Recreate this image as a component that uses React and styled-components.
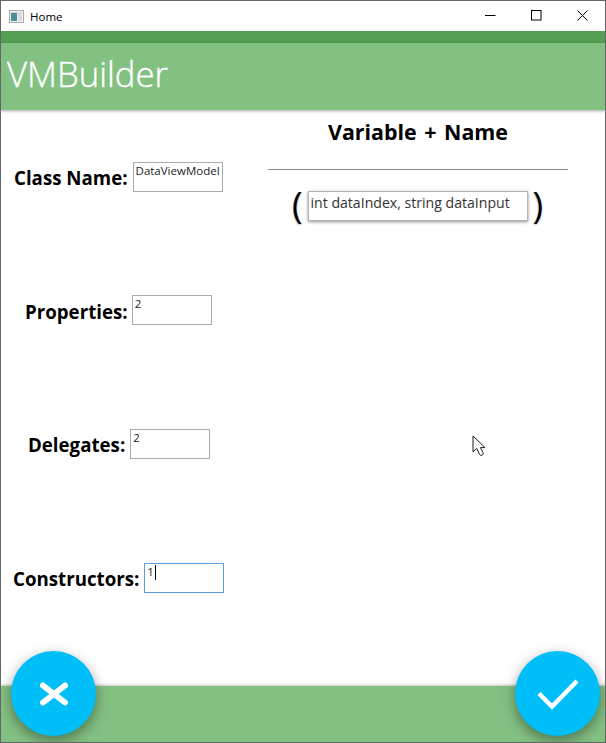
import React from "react";
import styled, { createGlobalStyle } from "styled-components";

const Global = createGlobalStyle`
  html, body { margin: 0; padding: 0; background: #fff; }
  * { box-sizing: border-box; }
  body { font-family: "Open Sans", "Noto Sans", "Liberation Sans", sans-serif; }
`;

const Frame = styled.div`
  position: relative;
  width: 606px;
  height: 743px;
  border: 1px solid #666;
  display: flex;
  flex-direction: column;
  overflow: hidden;
  background: #fff;
`;
const TitleBar = styled.div`
  height: 30px;
  flex: none;
  display: flex;
  align-items: center;
  background: #fff;
  padding-left: 8px;
`;
const TitleText = styled.span`
  font-size: 11.5px;
  color: #000;
  margin-left: 6px;
`;
const WinButtons = styled.div`
  margin-left: auto;
  display: flex;
  align-items: center;
`;
const WinButton = styled.div`
  width: 46px;
  height: 30px;
  display: flex;
  align-items: center;
  justify-content: center;
  margin-top: -1px;
`;
const Strip = styled.div`
  height: 12px;
  flex: none;
  background: #559f55;
`;
const AppBar = styled.header`
  height: 67px;
  flex: none;
  background: #83c183;
  box-shadow: 0 1px 3px rgba(0, 0, 0, 0.35);
  display: flex;
  align-items: center;
  padding-left: 6px;
  position: relative;
  z-index: 1;
`;
const AppTitle = styled.h1`
  margin: 0 0 5px;
  font-size: 34.7px;
  font-weight: 300;
  -webkit-text-stroke: 0.35px #fff;
  color: #fff;
  line-height: 1;
`;
const Main = styled.main`
  flex: 1;
  display: flex;
  min-height: 0;
`;
const Form = styled.section`
  width: 260px;
  flex: none;
  display: flex;
  flex-direction: column;
  padding-top: 52px;
  gap: 104px;
`;
const Row = styled.div`
  display: flex;
  align-items: center;
  height: 30px;
  padding-left: ${(p) => p.$indent}px;
  gap: ${(p) => p.$gap}px;
  margin-top: ${(p) => p.$lift || 0}px;
`;
const Label = styled.label`
  font-size: 18.7px;
  font-weight: 700;
  color: #000;
  white-space: nowrap;
  padding-top: ${(p) => p.$drop || 0}px;
`;
const Field = styled.div`
  width: ${(p) => p.$width}px;
  height: 30px;
  flex: none;
  border: 1px solid ${(p) => (p.$focused ? "#5b9ee0" : "#ababab")};
  font-size: 11.5px;
  line-height: 14px;
  padding: 1px 2px;
  color: #1c1c1c;
  display: flex;
  align-items: flex-start;
  white-space: nowrap;
`;
const Caret = styled.span`
  width: 1px;
  height: 15px;
  background: #000;
  margin-left: 1px;
`;
const Side = styled.section`
  width: 300px;
  margin-left: 7px;
  flex: none;
  display: flex;
  flex-direction: column;
  align-items: center;
`;
const Heading = styled.h2`
  margin: 8px 0 0;
  height: 51px;
  font-size: 21.4px;
  font-weight: 700;
  line-height: 28px;
  color: #000;
  word-spacing: 2px;
`;
const Rule = styled.hr`
  width: 100%;
  height: 1px;
  margin: 0;
  border: 0;
  background: #8a8a8a;
`;
const ParamRow = styled.div`
  display: flex;
  align-items: center;
  gap: 5px;
  margin-top: 20px;
  margin-left: -1px;
`;
const Paren = styled.span`
  font-size: 36px;
  font-weight: 400;
  color: #000;
  line-height: 30px;
  text-shadow: 0 1px 2px rgba(0, 0, 0, 0.3);
  margin-bottom: 2px;
`;
const ParamField = styled.div`
  width: 220px;
  height: 30px;
  border: 1px solid #b5b5b5;
  box-shadow: 0 1px 3px rgba(0, 0, 0, 0.45);
  font-size: 14.1px;
  color: #333;
  padding: 1px 2px;
  line-height: 20px;
  white-space: nowrap;
`;
const BottomBar = styled.footer`
  height: 56px;
  flex: none;
  background: #83c183;
  box-shadow: 0 -1px 2px rgba(0, 0, 0, 0.25);
`;
const Fab = styled.button`
  position: absolute;
  top: 650px;
  ${(p) => (p.$right ? "right: 5px;" : "left: 10px;")}
  width: 85px;
  height: 85px;
  border: 0;
  padding: 0;
  border-radius: 50%;
  background: #00bef8;
  box-shadow: 0 5px 14px rgba(0, 0, 0, 0.4);
  display: flex;
  align-items: center;
  justify-content: center;
`;
const Pointer = styled.svg`
  position: absolute;
  left: 471px;
  top: 434px;
`;

export default function App() {
  return (
    <>
      <Global />
      <Frame>
        <TitleBar>
          <svg width="15" height="13" viewBox="0 0 15 13">
            <rect x="0.5" y="0.5" width="14" height="12" fill="#f2f2f2" stroke="#a9a9a9" />
            <rect x="2" y="3" width="6" height="8" fill="#4d8d94" />
            <rect x="9" y="3" width="4" height="8" fill="#d5dde2" />
            <rect x="2" y="2" width="11" height="1" fill="#cfd6dc" />
          </svg>
          <TitleText>Home</TitleText>
          <WinButtons>
            <WinButton>
              <svg width="11" height="11" viewBox="0 0 11 11">
                <path d="M0 5.5H10.5" stroke="#000" strokeWidth="1" />
              </svg>
            </WinButton>
            <WinButton>
              <svg width="11" height="11" viewBox="0 0 11 11">
                <rect x="0.5" y="0.5" width="9.5" height="9.5" fill="none" stroke="#000" />
              </svg>
            </WinButton>
            <WinButton>
              <svg width="11" height="11" viewBox="0 0 11 11">
                <path d="M0.5 0.5L10.5 10.5M10.5 0.5L0.5 10.5" stroke="#000" strokeWidth="1" />
              </svg>
            </WinButton>
          </WinButtons>
        </TitleBar>
        <Strip />
        <AppBar>
          <AppTitle>VMBuilder</AppTitle>
        </AppBar>
        <Main>
          <Form>
            <Row $indent={13} $gap={5}>
              <Label>Class Name:</Label>
              <Field $width={90}>DataViewModel</Field>
            </Row>
            <Row $indent={24} $gap={4} $lift={-1}>
              <Label $drop={2}>Properties:</Label>
              <Field $width={80}>2</Field>
            </Row>
            <Row $indent={27} $gap={5}>
              <Label>Delegates:</Label>
              <Field $width={80}>2</Field>
            </Row>
            <Row $indent={12} $gap={5}>
              <Label>Constructors:</Label>
              <Field $width={80} $focused>
                1<Caret />
              </Field>
            </Row>
          </Form>
          <Side>
            <Heading>Variable + Name</Heading>
            <Rule />
            <ParamRow>
              <Paren>(</Paren>
              <ParamField>int dataIndex, string dataInput</ParamField>
              <Paren>)</Paren>
            </ParamRow>
          </Side>
        </Main>
        <BottomBar />
        <Fab aria-label="Cancel">
          <svg width="30" height="24" viewBox="0 0 30 24">
            <path d="M4 3.5L26 20.5M26 3.5L4 20.5" stroke="#fff" strokeWidth="6" strokeLinecap="round" />
          </svg>
        </Fab>
        <Fab $right aria-label="Confirm">
          <svg width="42" height="32" viewBox="0 0 42 32">
            <path d="M2 15.5L15 28.5L40 3" fill="none" stroke="#fff" strokeWidth="4.5" />
          </svg>
        </Fab>
        <Pointer width="14" height="22" viewBox="0 0 14 22">
          <path
            d="M1 1V17L4.8 13.4L7.6 19.6Q8.6 21 10.4 20Q11.8 19 11 17.6L8.4 12.6H13Z"
            fill="#fff"
            stroke="#1a1a2a"
            strokeWidth="1"
            strokeLinejoin="round"
          />
        </Pointer>
      </Frame>
    </>
  );
}
